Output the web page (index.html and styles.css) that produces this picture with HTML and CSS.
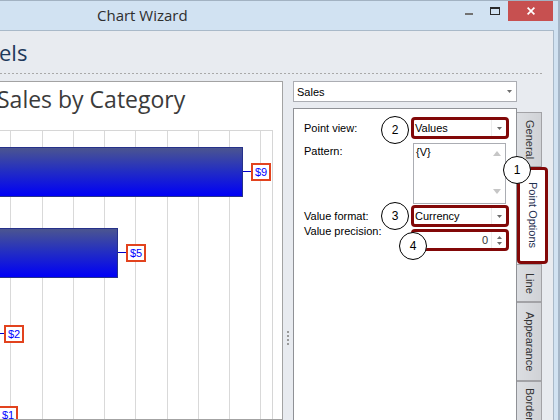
FILE: index.html
```html
<!DOCTYPE html>
<html>
<head>
<meta charset="utf-8">
<title>Chart Wizard</title>
<link rel="stylesheet" href="styles.css">
</head>
<body>
<div class="window">
  <div class="titlebar">
    <div class="title">Chart Wizard</div>
    <div class="controls">
      <div class="wbtn min"><span class="min-glyph"></span></div>
      <div class="wbtn"><span class="max-glyph"></span></div>
      <div class="wbtn close"><svg width="8" height="8" viewBox="0 0 8 8"><path d="M0.6 0.6L7.4 7.4M7.4 0.6L0.6 7.4" stroke="#fff" stroke-width="1.7"/></svg></div>
    </div>
  </div>
  <div class="client">
    <div class="header"><h1 class="page-title">els</h1></div>
    <div class="rule"></div>
    <div class="content">
      <div class="chart">
        <div class="chart-title">Sales by Category</div>
        <div class="plot">
          <div class="series">
            <div class="row"><div class="bar" style="width:281px"></div><span class="conn"></span><span class="lbl">$9</span></div>
            <div class="row"><div class="bar" style="width:156px"></div><span class="conn"></span><span class="lbl">$5</span></div>
            <div class="row"><div class="bar" style="width:34px"></div><span class="conn"></span><span class="lbl">$2</span></div>
            <div class="row"><div class="bar" style="width:28px"></div><span class="conn"></span><span class="lbl">$1</span></div>
          </div>
        </div>
      </div>
      <div class="splitter"><span class="grip"></span></div>
      <div class="options">
        <div class="combo">
          <span class="ctext">Sales</span>
          <svg class="dd" width="5" height="3" viewBox="0 0 5 3"><path d="M0 0H5L2.5 3Z" fill="#6e6e6e"/></svg>
        </div>
        <div class="tabctl">
          <div class="page">
            <div class="frow r1">
              <span class="lab">Point view:</span>
              <div class="hl">
                <span class="ctext">Values</span>
                <span class="ddbtn"><svg width="5" height="3" viewBox="0 0 5 3"><path d="M0 0H5L2.5 3Z" fill="#6e6e6e"/></svg></span>
              </div>
            </div>
            <div class="frow r2">
              <span class="lab">Pattern:</span>
              <div class="memo">
                <span class="memo-text">{V}</span>
                <div class="sb">
                  <svg width="8" height="5" viewBox="0 0 8 5"><path d="M0 5L4 0 8 5Z" fill="#c6c6c6"/></svg>
                  <svg width="8" height="5" viewBox="0 0 8 5"><path d="M0 0H8L4 5Z" fill="#c6c6c6"/></svg>
                </div>
              </div>
            </div>
            <div class="frow r3">
              <span class="lab">Value format:</span>
              <div class="hl">
                <span class="ctext">Currency</span>
                <span class="ddbtn"><svg width="5" height="3" viewBox="0 0 5 3"><path d="M0 0H5L2.5 3Z" fill="#6e6e6e"/></svg></span>
              </div>
            </div>
            <div class="frow r4">
              <span class="lab">Value precision:</span>
              <div class="hl spin">
                <span class="num">0</span>
                <span class="spinbtn">
                  <svg width="5" height="3" viewBox="0 0 5 3"><path d="M0 3L2.5 0 5 3Z" fill="#6e6e6e"/></svg>
                  <svg width="5" height="3" viewBox="0 0 5 3"><path d="M0 0H5L2.5 3Z" fill="#6e6e6e"/></svg>
                </span>
              </div>
            </div>
          </div>
          <div class="tabs">
            <div class="tab t-general"><span>General</span></div>
            <div class="tab sel t-point"><span>Point Options</span></div>
            <div class="tab t-line"><span>Line</span></div>
            <div class="tab t-app"><span>Appearance</span></div>
            <div class="tab t-border"><span>Border</span></div>
          </div>
        </div>
        <span class="step s1">1</span>
        <span class="step s2">2</span>
        <span class="step s3">3</span>
        <span class="step s4">4</span>
      </div>
    </div>
  </div>
</div>
</body>
</html>
```

FILE: styles.css
```css
* { box-sizing: border-box; }
html, body { margin: 0; padding: 0; }
body {
  width: 560px;
  height: 420px;
  overflow: hidden;
  background: #d1e2f2;
  font-family: "Liberation Sans", Arial, sans-serif;
  font-size: 11px;
  color: #000;
}
.window {
  width: 560px;
  height: 420px;
  display: flex;
  flex-direction: column;
  background: #d1e2f2;
  border-top: 1px solid #a2b2c2;
  border-right: 2px solid #a5b6c8;
  overflow: hidden;
}
.titlebar {
  flex: none;
  height: 29px;
  display: flex;
  align-items: flex-start;
}
.title {
  font-family: "Open Sans", sans-serif;
  font-size: 15px;
  line-height: 29px;
  color: #2e2e2e;
  padding-left: 97px;
}
.controls {
  margin-left: auto;
  margin-right: 5px;
  display: flex;
}
.wbtn {
  width: 26px;
  height: 20px;
  display: flex;
  align-items: center;
  justify-content: center;
}
.wbtn.min { width: 27px; }
.min-glyph {
  width: 8px;
  height: 2px;
  background: #727272;
  margin-top: 6px;
}
.max-glyph {
  width: 10px;
  height: 8px;
  border: 1px solid #2b2b2b;
  border-top-width: 2px;
}
.wbtn.close {
  width: 45px;
  background: #c75050;
}
.client {
  flex: 1;
  min-height: 0;
  margin-right: 4px;
  background: #e8ebf0;
  border-top: 1px solid #a9b9c9;
  border-right: 1px solid #a9b9c9;
  display: flex;
  flex-direction: column;
}
.header {
  height: 42px;
  flex: none;
  overflow: hidden;
}
.page-title {
  margin: 0;
  font-family: "Open Sans", sans-serif;
  font-weight: 400;
  font-size: 22px;
  line-height: 42px;
  color: #1e395b;
  margin-left: -1px;
}
.rule {
  height: 1px;
  flex: none;
  margin-right: 10px;
  background: repeating-linear-gradient(to right, #a9a9a9 0, #a9a9a9 2px, transparent 2px, transparent 4px);
}
.content {
  flex: 1;
  min-height: 0;
  margin-top: 7px;
  display: flex;
}
.chart {
  width: 284px;
  margin-left: -1px;
  flex: none;
  background: #fff;
  border: 1px solid #a3a3a3;
  overflow: hidden;
  display: flex;
  flex-direction: column;
}
.chart-title {
  font-family: "Open Sans", sans-serif;
  font-size: 23px;
  line-height: 30px;
  padding-top: 2px;
  margin-left: -3px;
  color: #3b3b3b;
  white-space: nowrap;
}
.plot {
  margin-top: 16px;
  margin-right: 9px;
  flex: 1;
  border-top: 1px solid #d6d6d6;
  border-right: 1px solid #d6d6d6;
  background-image:
    linear-gradient(#d9d9d9, #d9d9d9),
    linear-gradient(#d9d9d9, #d9d9d9),
    linear-gradient(#d9d9d9, #d9d9d9),
    linear-gradient(#d9d9d9, #d9d9d9),
    linear-gradient(#d9d9d9, #d9d9d9),
    linear-gradient(#d9d9d9, #d9d9d9),
    linear-gradient(#d9d9d9, #d9d9d9),
    linear-gradient(#d9d9d9, #d9d9d9),
    linear-gradient(#d9d9d9, #d9d9d9);
  background-size: 1px 100%;
  background-repeat: no-repeat;
  background-position: 10px 0, 42px 0, 73px 0, 104px 0, 135px 0, 167px 0, 198px 0, 229px 0, 260px 0;
}
.series {
  margin-left: -38px;
}
.row {
  height: 81px;
  display: flex;
  align-items: center;
}
.bar {
  flex: none;
  height: 50px;
  border: 1px solid #26318a;
  background: linear-gradient(to bottom, #4b5590 0%, #2530c0 45%, #0000f6 100%);
}
.conn {
  flex: none;
  width: 8px;
  height: 1px;
  background: #0000c8;
}
.lbl {
  flex: none;
  width: 20px;
  height: 18px;
  border: 2px solid #e2431e;
  background: #fff;
  color: #0000ff;
  font-size: 11px;
  line-height: 14px;
  text-align: center;
}
.splitter {
  width: 10px;
  flex: none;
  display: flex;
  justify-content: center;
  padding-top: 250px;
}
.grip {
  width: 2px;
  height: 14px;
  background: repeating-linear-gradient(to bottom, #9a9a9a 0, #9a9a9a 2px, transparent 2px, transparent 4px);
}
.options {
  flex: 1;
  position: relative;
  display: flex;
  flex-direction: column;
}
.combo {
  width: 224px;
  height: 21px;
  flex: none;
  background: #fff;
  border: 1px solid #abadb3;
  display: flex;
  align-items: center;
  padding-left: 3px;
}
.ctext { flex: 1; white-space: nowrap; }
.dd { margin-right: 4px; }
.tabctl {
  margin-top: 6px;
  flex: 1;
  display: flex;
  align-items: flex-start;
}
.page {
  width: 224px;
  align-self: stretch;
  flex: none;
  background: #fff;
  border: 1px solid #8f9196;
  border-bottom: none;
  padding: 8px 0 0 10px;
  display: flex;
  flex-direction: column;
}
.frow {
  display: flex;
  align-items: center;
}
.lab {
  width: 107px;
  flex: none;
  line-height: 13px;
  white-space: nowrap;
}
.hl {
  width: 98px;
  height: 22px;
  flex: none;
  border: 3px solid #820808;
  border-radius: 4px;
  background: #fff;
  display: flex;
  align-items: center;
  padding-left: 1px;
}
.ddbtn {
  width: 15px;
  align-self: stretch;
  display: flex;
  align-items: center;
  justify-content: center;
  border-left: 1px solid #ececec;
}
.r2 { margin-top: 4px; align-items: flex-start; }
.r2 .lab { padding-top: 2px; }
.memo {
  margin-left: 2px;
  width: 93px;
  height: 61px;
  border: 1px solid #abadb3;
  display: flex;
}
.memo-text {
  flex: 1;
  padding: 2px 0 0 2px;
  line-height: 13px;
}
.sb {
  width: 15px;
  margin: 1px 1px 1px 0;
  display: flex;
  flex-direction: column;
  justify-content: space-between;
  align-items: center;
  padding: 6px 0 8px;
}
.r3 { margin-top: 1px; }
.r4 { margin-top: 2px; align-items: flex-start; }
.r4 .lab { margin-top: -4px; }
.spin { justify-content: flex-end; padding-left: 0; }
.num {
  color: #333;
  margin-right: 3px;
}
.spinbtn {
  width: 15px;
  align-self: stretch;
  display: flex;
  flex-direction: column;
  align-items: center;
  justify-content: center;
  gap: 3px;
  border-left: 1px solid #ececec;
}
.tabs {
  width: 31px;
  flex: none;
  padding-top: 4px;
  display: flex;
  flex-direction: column;
}
.tab {
  width: 25px;
  flex: none;
  background: linear-gradient(to right, #dcdee2, #d0d2d6);
  border: 1px solid #a2a2a6;
  border-left: none;
  display: flex;
  align-items: center;
  justify-content: center;
  color: #333;
}
.tab span {
  writing-mode: vertical-rl;
  font-size: 11px;
  line-height: 13px;
  white-space: nowrap;
}
.t-general { height: 55px; }
.t-point {
  height: 97px;
  width: 31px;
  background: #fff;
  border: 3px solid #820808;
  border-radius: 4px;
  color: #1f2f4f;
}
.t-line { height: 38px; }
.t-app { height: 79px; }
.t-border { height: 60px; align-items: flex-start; padding-top: 6px; }
.step {
  position: absolute;
  width: 28px;
  height: 28px;
  border: 1.5px solid #000;
  border-radius: 50%;
  background: #fff;
  display: flex;
  align-items: center;
  justify-content: center;
  font-size: 12px;
  color: #000;
}
.s1 { left: 210px; top: 75px; }
.s2 { left: 88px; top: 35px; }
.s3 { left: 88px; top: 121px; }
.s4 { left: 106px; top: 151px; }
```
